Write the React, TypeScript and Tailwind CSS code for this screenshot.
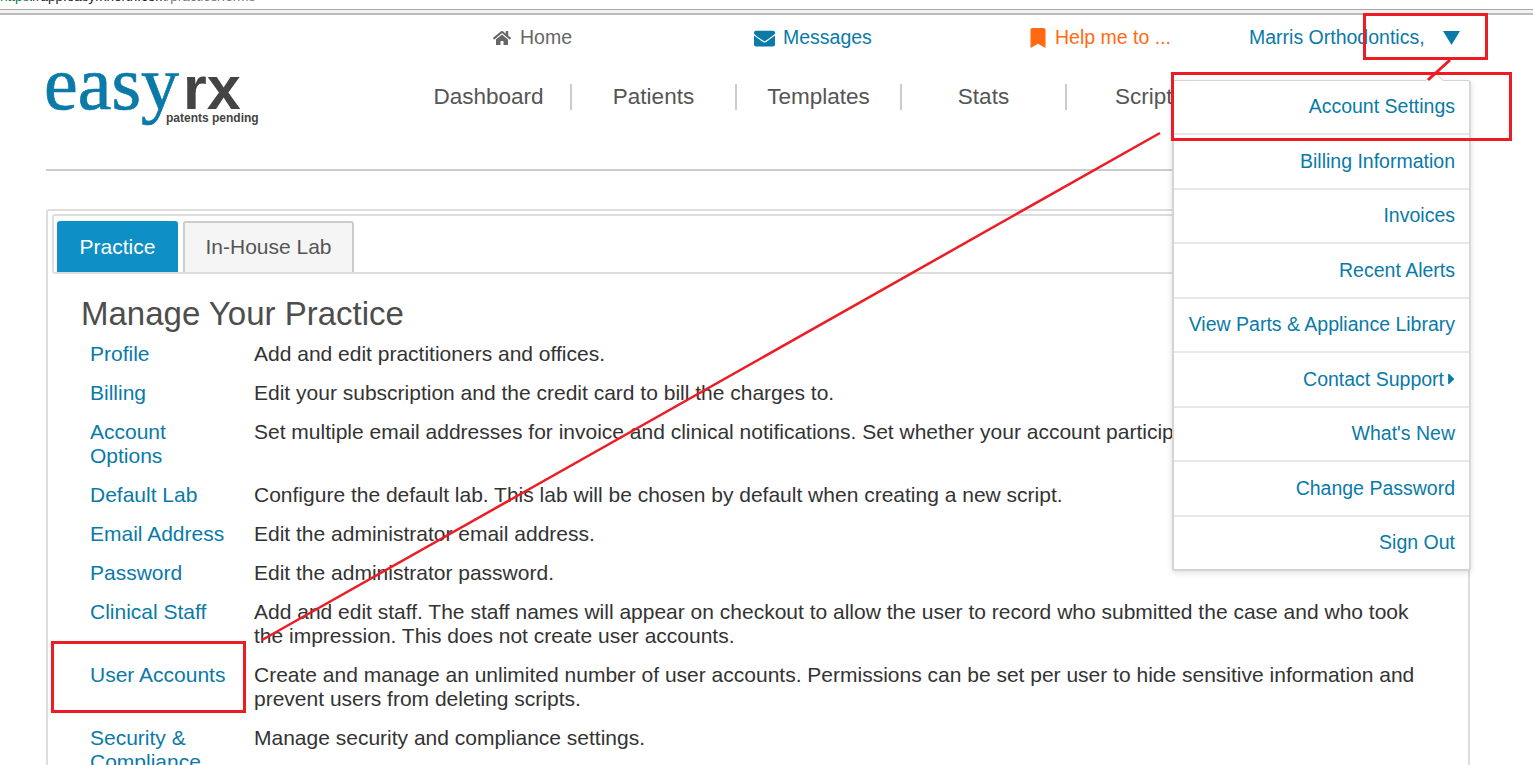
import React from 'react';
import { FaHome, FaEnvelope, FaBookmark, FaCaretRight } from 'react-icons/fa';

const rows = [
  { label: 'Profile', text: 'Add and edit practitioners and offices.' },
  { label: 'Billing', text: 'Edit your subscription and the credit card to bill the charges to.' },
  { label: 'Account Options', text: 'Set multiple email addresses for invoice and clinical notifications. Set whether your account participates in the lab directory.' },
  { label: 'Default Lab', text: 'Configure the default lab. This lab will be chosen by default when creating a new script.' },
  { label: 'Email Address', text: 'Edit the administrator email address.' },
  { label: 'Password', text: 'Edit the administrator password.' },
  { label: 'Clinical Staff', text: 'Add and edit staff. The staff names will appear on checkout to allow the user to record who submitted the case and who took the impression. This does not create user accounts.' },
  { label: 'User Accounts', text: 'Create and manage an unlimited number of user accounts. Permissions can be set per user to hide sensitive information and prevent users from deleting scripts.' },
  { label: 'Security & Compliance', text: 'Manage security and compliance settings.' },
];

const navItems = ['Dashboard', 'Patients', 'Templates', 'Stats', 'Scripts'];

const menuItems = ['Account Settings', 'Billing Information', 'Invoices', 'Recent Alerts', 'View Parts & Appliance Library', 'Contact Support', "What's New", 'Change Password', 'Sign Out'];

function Logo() {
  return (
    <div className="relative w-[215px] h-[90px] shrink-0">
      <div className="flex items-baseline h-[73px] leading-[80px] -mt-[16px] -ml-[2px]">
        <span className="font-['Liberation_Serif',serif] text-[76px] text-[#0a7aa8] [-webkit-text-stroke:0.7px_#0a7aa8]">easy</span>
        <span className="font-['Liberation_Sans',sans-serif] font-bold text-[61px] ml-[4px] text-[#444]">rx</span>
      </div>
      <span className="absolute left-[120px] top-[50px] text-[12px] font-bold text-[#444]">patents pending</span>
    </div>
  );
}

function Dropdown() {
  return (
    <div className="absolute left-[1172px] top-[80px] w-[299px] bg-white border-2 border-t border-[#d4d4d4] border-r-[#d8d8d8] rounded-[3px] shadow-[0_2px_6px_rgba(0,0,0,0.12)] text-[19.5px] text-[#0a7aa8]">
      <div className="absolute left-[254px] -top-[7px] w-[13px] h-[13px] rotate-45 bg-white border-l border-t border-[#d8d8d8]" />
      {menuItems.map((item, i) => (
        <div key={item} className={`relative flex items-center justify-end pr-[14px] ${i ? 'h-[54.5px] border-t-2 border-[#e8e8e8]' : 'h-[52px]'}`}>
          {item}
          {item === 'Contact Support' && <FaCaretRight className="w-[7px] h-[18px] ml-[4px]" />}
        </div>
      ))}
    </div>
  );
}

// red callouts drawn on top of the page
function Annotations() {
  return (
    <>
      <svg className="absolute left-0 top-0 pointer-events-none" width="1533" height="765">
        <line x1="1160" y1="133" x2="262" y2="640" stroke="#ed1c24" strokeWidth="2.5" />
        <line x1="1450" y1="60" x2="1428" y2="80" stroke="#ed1c24" strokeWidth="3" />
      </svg>
      <div className="absolute left-[1363px] top-[13px] w-[125px] h-[47px] border-[3px] border-[#ed1c24]" />
      <div className="absolute left-[1171px] top-[72px] w-[341px] h-[69px] border-[3px] border-[#ed1c24]" />
      <div className="absolute left-[51px] top-[641px] w-[195px] h-[72px] border-[3px] border-[#ed1c24]" />
    </>
  );
}

export default function App() {
  return (
    <div className="relative h-[765px] w-[1533px] overflow-hidden bg-white font-['Liberation_Sans',sans-serif] text-[21px] text-[#333]">
      <div className="h-[15px] overflow-hidden bg-[#fff]">
        <div className="h-[10px] border-b border-[#a8a8a8] overflow-hidden">
          <div className="-mt-[10px] text-[13.5px] leading-[14px] text-[#777]"><span className="text-[#0a7a4a]">https</span><span className="text-[#222]">://app.easyrxnorth.com</span>/practice/forms</div>
        </div>
        <div className="h-[5px] border-b-2 border-[#bbb] bg-[#f2f2f2]" />
      </div>

      <header className="pl-[46px] pr-[63px]">
        <div className="h-[44px] pt-[2px] flex items-center text-[19.5px]">
          <a className="ml-[447px] w-[261px] flex items-center gap-[9px] text-[#666]"><FaHome className="text-[18px] text-[#666]" />Home</a>
          <a className="w-[274px] flex items-center gap-[8px] text-[#0a7aa8]"><FaEnvelope className="text-[21px]" />Messages</a>
          <a className="w-[221px] flex items-center gap-[7px] text-[#ff6a13]"><FaBookmark className="text-[20px]" />Help me to ...</a>
          <a className="flex items-center text-[#0a7aa8]">
            Marris Orthodontics,
            <svg className="ml-[18px]" width="17" height="14" viewBox="0 0 17 14"><polygon points="0,0 17,0 8.5,14" fill="#0a7aa8" /></svg>
          </a>
        </div>
        <div className="flex h-[112px] border-b-2 border-[#ccc]">
          <Logo />
          <nav className="flex ml-[146px] mt-[10px] h-[52px] items-start text-[22.5px] text-[#555]">
            {navItems.map((n, i) => (
              <div key={n} className={`w-[165px] h-[26px] mt-[15px] flex items-center justify-center ${i < 4 ? 'border-r-2 border-[#ccc]' : ''}`}>{n}</div>
            ))}
          </nav>
        </div>
      </header>

      <main className="ml-[46px] mr-[63px] mt-[38px] border-2 border-[#ddd] rounded-[3px] pb-6">
        <div className="mx-[4px] mt-[3px] h-[60px] border-2 border-[#ddd] rounded-[3px] flex items-end pl-[3px] gap-[5px]">
          <div className="w-[121px] h-[51px] rounded-t-[3px] bg-[#0e8fc6] text-white flex items-center justify-center">Practice</div>
          <div className="w-[171px] h-[51px] pb-[2px] rounded-t-[3px] border-2 border-b-0 border-[#ccc] bg-[#f5f5f5] text-[#555] flex items-center justify-center">In-House Lab</div>
        </div>
        <div className="pl-[33px] pr-[32px]">
          <h1 className="mt-[18px] mb-[6px] text-[33px] leading-[44px] text-[#4d4d4d]">Manage Your Practice</h1>
          <div className="flex flex-col gap-[15px] leading-[24px]">
            {rows.map((r) => (
              <div key={r.label} className="grid grid-cols-[173px_1fr]">
                <a className="pl-[9px] pr-[20px] text-[#0a7aa8]">{r.label}</a>
                <p>{r.text}</p>
              </div>
            ))}
          </div>
        </div>
      </main>

      <Dropdown />
      <Annotations />
    </div>
  );
}
